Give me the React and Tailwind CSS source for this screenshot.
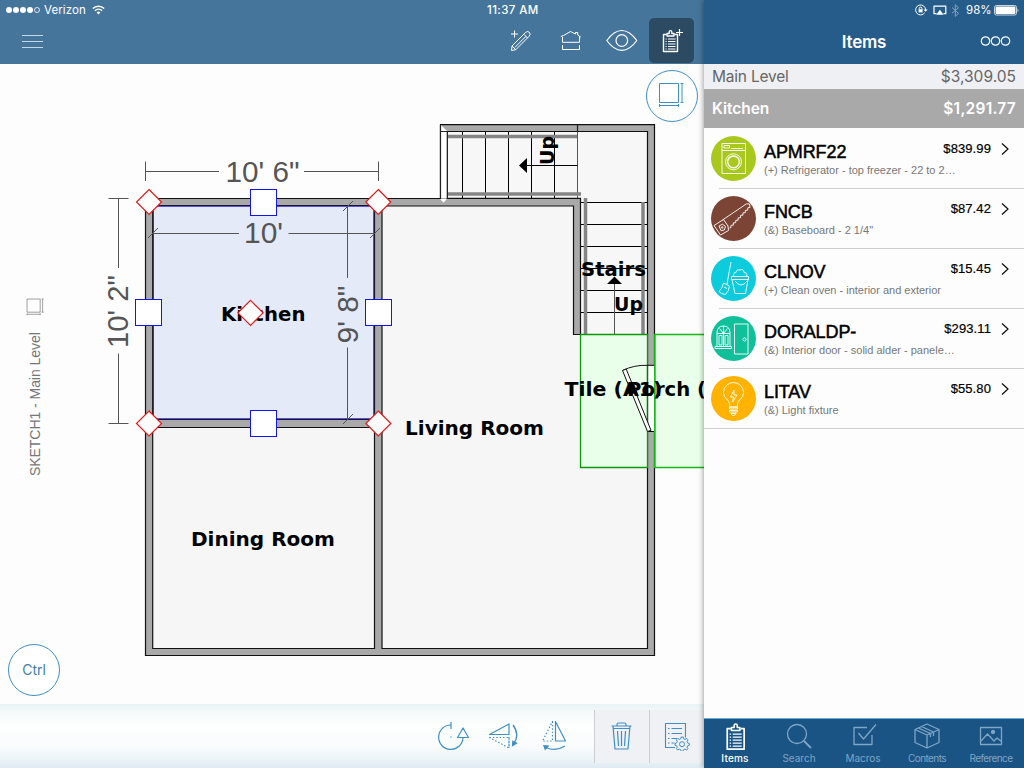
import React from 'react';

const stroke = { fill: 'none', stroke: 'currentColor', strokeLinejoin: 'round' };

function StatusLeft() {
  return (
    <div className="flex h-5 items-center pl-[6px] text-white">
      <div className="flex gap-[1px]">
        {[0, 1, 2, 3].map((n) => (
          <span key={n} className="h-[6px] w-[6px] rounded-full bg-white" />
        ))}
        <span className="h-[6px] w-[6px] rounded-full border border-white/80" />
      </div>
      <span className="ml-[4px] w-[43px] whitespace-nowrap text-[11.5px] leading-5 tracking-[0.1px]">Verizon</span>
      <svg className="ml-[5px]" width="13" height="10" viewBox="0 0 13 10" {...stroke}>
        <path d="M.8 3.5a8.2 8.2 0 0 1 11.4 0" strokeWidth="1.5" />
        <path d="M2.9 5.7a5.2 5.2 0 0 1 7.2 0" strokeWidth="1.5" />
        <path d="M6.5 9.4 4.6 7.4a2.8 2.8 0 0 1 3.8 0Z" fill="currentColor" stroke="none" />
      </svg>
      <span className="ml-[382px] whitespace-nowrap text-[11.5px] font-medium leading-5 tracking-[0.4px]">11:37 AM</span>
    </div>
  );
}

function StatusRight() {
  return (
    <div className="flex h-5 items-center pl-[211px] text-white">
      <svg width="13" height="12" viewBox="0 0 13 12" {...stroke}>
        <path d="M9.7 8.8A5 5 0 1 1 10.6 6" />
        <path d="m8.5 5.5 2.1 2.2 2.1-2.2Z" fill="currentColor" stroke="none" />
        <path d="M4.3 5.4v-1a1.3 1.3 0 0 1 2.6 0v1" />
        <path d="M3.6 5.2h4v3.2h-4Z" fill="currentColor" stroke="none" />
      </svg>
      <svg className="ml-[5px]" width="14" height="11" viewBox="0 0 14 11" {...stroke}>
        <path d="M3.5 8.7H1V1.2h11.8v7.5h-2.3" strokeWidth="1.2" />
        <path d="m6.9 4.8 3.7 5H3.2Z" fill="currentColor" stroke="none" />
      </svg>
      <svg className="ml-[4px] text-[#84a5c0]" width="9" height="13" viewBox="0 0 9 13" {...stroke}>
        <path d="m1 3.5 6.5 5.8-3.2 3V.8l3.2 3L1 9.2" />
      </svg>
      <span className="ml-[6px] w-[26px] whitespace-nowrap text-[11.5px] leading-5">98%</span>
      <svg className="ml-[2px]" width="25" height="11" viewBox="0 0 25 11">
        <rect x=".5" y=".5" width="22" height="9.5" rx="1.8" fill="none" stroke="#c7d6e2" />
        <rect x="1.6" y="1.6" width="19.8" height="7.4" rx=".8" fill="#fff" />
        <path d="M23.5 3.5c1.3.4 1.3 3.2 0 3.6Z" fill="#c7d6e2" />
      </svg>
    </div>
  );
}

function Clipboard({ plus, width, height }) {
  return (
    <svg width={width} height={height} viewBox="0 0 24 24" {...stroke}>
      <path d="M6.500 5.500H3.500V22.500h14V5.500h-3" strokeWidth="1.400" />
      <path d="M7 7V4.500h2.200V3a1.300 1.300 0 0 1 2.600 0v1.500H14V7Z" strokeWidth="1.300" />
      <path d="M5.500 10h1.200M8 10h7.500M5.500 12.500h1.200M8 12.500h7.500M5.500 15h1.200M8 15h7.500M5.500 17.500h1.200M8 17.500h7.500M5.500 20h1.200M8 20h7.500" />
      {plus && <path d="M19.500 0v7M16 3.500h7" strokeWidth="1.200" />}
    </svg>
  );
}

function EditorHeader() {
  return (
    <header className="h-16 bg-[#46759c]">
      <StatusLeft />
      <div className="flex h-11 items-center pb-[2px] text-white">
        <div className="ml-[22px] flex w-[21px] flex-col gap-[5px]">
          <span className="h-px bg-[#c3d8e4]" />
          <span className="h-px bg-[#c3d8e4]" />
          <span className="h-px bg-[#c3d8e4]" />
        </div>
        <svg className="ml-[467px]" width="24" height="26" viewBox="0 0 24 26" {...stroke}>
          <path d="M4.500 2.500v7M1 6h7" />
          <path d="M2 18 15.500 4.500q2-2 3.800-.200t0 3.800L5.800 21.700 1.500 22.500ZM2 18l3.800 3.700M13.800 6.200l3.900 3.900M16 8.300 5 19.300" />
        </svg>
        <svg className="ml-[26px]" width="22" height="24" viewBox="0 0 22 24" {...stroke}>
          <path d="m.8 7.800 1.700-1.300h1L10.500 2.500l5 2.500V3.500h2.200V6l3 2M2.500 7.500v5.800h17V7.500M2.500 16v4.500h17V16" />
        </svg>
        <svg className="ml-[24px]" width="32" height="24" viewBox="0 0 32 24" {...stroke}>
          <path d="M.8 11.500Q8 1.500 15.800 1.500t15 10q-7 9.800-15 9.800T.8 11.500Z" strokeWidth="1.200" />
          <circle cx="15.800" cy="11.500" r="5.800" strokeWidth="1.200" />
        </svg>
        <div className="-mt-px ml-[11px] flex h-[45px] w-[45px] items-center justify-center rounded-[5px] bg-[#2c4b63]">
          <Clipboard plus width={24} height={24} />
        </div>
      </div>
    </header>
  );
}

function Handle({ x, y, kind }) {
  return kind === 'square' ? (
    <rect x={x - 13} y={y - 13} width="26" height="26" fill="#fff" stroke="#1414ee" />
  ) : (
    <path d={`M${x} ${y - 12.500}l12.500 12.500-12.500 12.500-12.500-12.500Z`} fill="#fff" stroke="#e01b1b" strokeWidth="1.200" />
  );
}

const horizontalTreads = [462.500, 485.500, 508.500, 531.500, 554.500];
const verticalTreads = [202.500, 224.500, 246.500, 268.500, 290.500, 312.500];

function FloorPlan() {
  return (
    <svg className="block" width="704" height="640" viewBox="0 64 704 640">
      <g stroke="#111" strokeWidth="1.200">
        <path d="M145.500 198.500H440.500V124.700H654.500V655.500H145.500Z" fill="#a9a9a9" />
        <path d="M152.700 427.500H374.500V648.500H152.700Z" fill="#f6f6f6" />
        <path d="M382 206H573.500V334.500H647.500V648.500H382Z" fill="#f6f6f6" />
        <path d="M447.300 131.500H647.500V334.500H580.500V198.300H447.300Z" fill="#f7f7f7" />
        <path d="M152.700 205.500H374.500V419.500H152.700Z" fill="#e4eaf8" />
      </g>
      <path d="M153.500 206.300H373.700V418.700H153.500Z" fill="none" stroke="#3a2fc8" />
      <path d="M441 131.500h6v66.500h-6ZM441 125l6 6h-6ZM440 199h7l-3.500 3.500Z" fill="#fff" />
      <path d="M440.500 125v73.500M447.300 131.500v67M577.500 125v7" stroke="#222" strokeWidth="1.200" />
      <path d="M440.500 131.500h7" stroke="#222" />
      <g stroke="#000">
        {horizontalTreads.map((x) => <path key={x} d={`M${x} 132V198`} />)}
        {verticalTreads.map((y) => <path key={y} d={`M581 ${y}H647`} />)}
        <path d="M577.500 132V198" stroke="#555" />
        <path d="M527 165.500H577.500" />
        <path d="M614.500 283V334" stroke="#555" />
      </g>
      <path d="M519 165.500l8-7.500v15ZM607 284l7.500-7.500 7.500 7.500Z" fill="#000" />
      <path d="M448 136.500H577M448 194H581M585.500 198V334M643 202V334" stroke="#858585" strokeWidth="3.500" />

      <path d="M580.500 334.500H647.500V467.500H580.500Z" fill="#e9ffe9" stroke="#0b970b" strokeWidth="1.300" />
      <path d="M654.800 334.500H710V467.500H654.800Z" fill="#e9ffe9" stroke="#18b718" strokeWidth="1.300" />
      <path d="M648.200 365.300h6v66.200h-6Z" fill="#fff" />
      <path d="M648 365.300h6M648 431.500h6" stroke="#000" />
      <path d="M647.500 366v65" stroke="#087608" strokeWidth="1.300" />
      <path d="M654.800 334v134" stroke="#14bd14" strokeWidth="1.400" />
      <path d="M622.500 370.500Q634 364.800 648 365.300" fill="none" stroke="#111" />
      <path d="m622.500 370.500 3.700-1.500L651 430.300l-3.500 1.200Z" fill="#fff" stroke="#111" />

      <g fill="none" stroke="#555">
        <path d="M145.500 161.500v19.500M378.500 161.500v19.500M145.500 171.500H219M304 171.500H378.500" />
        <path d="M108.500 198.500h20M108.500 423.500h20M118.500 198.500V268M118.500 353.500V423.500" />
        <path d="M153 233.500H239M288.500 233.500H374M148 238l10-10M370 238l10-10" />
        <path d="M347.500 206V278M347.500 347.500V419M343 211l10-10M343 424l10-10" />
      </g>
      <g fill="#555" fontFamily="Liberation Sans, Arial, sans-serif" fontSize="29">
        <text x="225.500" y="181.500" textLength="74" lengthAdjust="spacingAndGlyphs">10' 6"</text>
        <text x="244" y="243" textLength="39" lengthAdjust="spacingAndGlyphs">10'</text>
        <text transform="translate(128 348) rotate(-90)" textLength="73" lengthAdjust="spacingAndGlyphs">10' 2"</text>
        <text transform="translate(357.500 343.500) rotate(-90)" textLength="58" lengthAdjust="spacingAndGlyphs">9' 8"</text>
      </g>
      <g fill="#000" fontFamily="DejaVu Sans, sans-serif" fontWeight="700" fontSize="19.500">
        <text x="221" y="320.500" textLength="84.500" lengthAdjust="spacingAndGlyphs">Kitchen</text>
        <text x="191" y="545.500" textLength="144" lengthAdjust="spacingAndGlyphs">Dining Room</text>
        <text x="405" y="434.500" textLength="139" lengthAdjust="spacingAndGlyphs">Living Room</text>
        <text x="581" y="276" textLength="65" lengthAdjust="spacingAndGlyphs">Stairs</text>
        <text x="614" y="311" textLength="29" lengthAdjust="spacingAndGlyphs">Up</text>
        <text transform="translate(554 165) rotate(-90)" textLength="29" lengthAdjust="spacingAndGlyphs">Up</text>
        <text x="564.500" y="395.500" textLength="98" lengthAdjust="spacingAndGlyphs">Tile (A1)</text>
        <text x="627" y="395.500" textLength="79" lengthAdjust="spacingAndGlyphs">Porch (</text>
      </g>
      <Handle x={263.500} y={202.500} kind="square" />
      <Handle x={148.500} y={312.500} kind="square" />
      <Handle x={378.500} y={312.500} kind="square" />
      <Handle x={263.500} y={423.500} kind="square" />
      <Handle x={149} y={202} />
      <Handle x={378.300} y={202} />
      <Handle x={149} y={423.500} />
      <Handle x={378.300} y={423.500} />
      <Handle x={250.500} y={312.800} />
    </svg>
  );
}

function DimensionIcon({ size }) {
  return (
    <svg width={size} height={size} viewBox="0 0 26 26" {...stroke}>
      <path d="M1.500 1.500h19v19h-19Z" />
      <path d="M22.500 1.500h3M22.500 20.500h3M24 1.500v19M1.500 22v3M20.500 22v3M1.500 23.500h19" />
    </svg>
  );
}

function EditorToolbar() {
  return (
    <footer className="flex h-16 items-center bg-[linear-gradient(to_bottom,#e8f3f6_0%,#f6fafb_14%,#fdfefe_35%,#fafcfd_65%,#eaf3f7_88%,#deebf2_100%)] text-[#3f8fc7]">
      <svg className="ml-[437px]" width="32" height="32" viewBox="0 0 32 32" {...stroke}>
        <path d="M14 5A12.200 12.200 0 1 0 26 18" strokeWidth="1.200" />
        <path d="M14 2v7" strokeWidth="1.200" />
        <path d="M26 8l5.500 9.500h-11Z" strokeWidth="1.200" />
        <path d="M13.300 17h1.400" />
      </svg>
      <svg className="ml-[19px]" width="32" height="32" viewBox="0 0 32 32" {...stroke}>
        <path d="M21 4v10.500H1.500Z" strokeWidth="1.200" />
        <path d="M1.500 17.500H21V28ZM21 17v11" strokeDasharray="1.400 2" strokeWidth="1.200" />
        <path d="M25 5q7 9.500 1 18.500" strokeWidth="1.300" />
        <path d="m24.300 20.300-.500 6.500 6-3.500Z" fill="currentColor" stroke="none" />
      </svg>
      <svg className="ml-[18px]" width="32" height="32" viewBox="0 0 32 32" {...stroke}>
        <path d="M17.500 1.500v19.500h10Z" strokeWidth="1.200" />
        <path d="M14.500 1.500v19.500H4.500Z" strokeDasharray="1.400 2" strokeWidth="1.200" />
        <path d="M8 27.500q9.500 4.500 19-1.500" strokeWidth="1.300" />
        <path d="m5 25 6.500.500-4.500 5Z" fill="currentColor" stroke="none" />
      </svg>
      <div className="ml-[24px] flex h-[53px] w-[55px] items-center justify-center border-l border-[#cacfd3] bg-[#f0f1f4] pr-[2px]">
        <svg width="23" height="30" viewBox="0 0 23 30" {...stroke}>
          <path d="M1.500 5h20M7 5V3.500q0-1.500 1.500-1.500h6Q16 2 16 3.500V5M3 5l2 23h13l2-23M3.500 7.500h16M7.500 10l1 15M11.500 10v15M15.500 10l-1 15" strokeWidth="1.200" />
        </svg>
      </div>
      <div className="flex h-[53px] w-[55px] items-center justify-center border-l border-[#cacfd3] bg-[#f0f1f4] pr-px">
        <svg width="27" height="30" viewBox="0 0 27 30" {...stroke}>
          <path d="M12 26.500H2.500v-24h20v14" strokeWidth="1.100" />
          <path d="M5 7.500h1.500M8.500 7.500H19M5 12.500h1.500M8.500 12.500H19M5 17.500h1.500M8.500 17.500H14M5 22h1.500M8.500 22h3" />
          <path d="m17.700 17.800.500-1.800h2l.500 1.800 1.300.600 1.800-.900 1.200 1.300-.900 1.700.500 1.400 1.700.500v1.800l-1.700.600-.500 1.400.800 1.500-1.300 1.300-1.700-.900-1.400.600-.500 1.600h-1.800l-.500-1.600-1.400-.600-1.700.900-1.200-1.300.900-1.500-.600-1.400-1.700-.600v-1.800l1.700-.500.600-1.400-.900-1.700 1.300-1.300 1.700.9Z" />
          <circle cx="19" cy="23.200" r="2.500" />
        </svg>
      </div>
    </footer>
  );
}

function WasherArt() {
  return (
    <>
      <path d="M11 7.500h23.500v30H11ZM11 14.500h23.500M13 9.500h5.500v2.500H13ZM20 12.500h12" />
      <circle cx="22.500" cy="25.800" r="8" />
      <circle cx="22.500" cy="25.800" r="5.900" strokeWidth="1.500" />
    </>
  );
}

function SawArt() {
  return (
    <>
      <path d="M11.500 24 35.500 7.800l3 .200.500 3.500-2.200.300-.100 2.400-2.300.100-.100 2.400-2.300.100-.100 2.400-2.300.100-.100 2.400-2.300.100-.100 2.400-2.300.100-.100 2.400-2.300.100-.100 2.400-2.300.100-.100 2.400-1.500.300" />
      <path d="M3 29.500 12.500 23.500l4.500 6.500.500 4.500L9.500 39ZM8 30l3.500-1.800 3 2.300-1.200 3.500-3.300.700Z" />
      <circle cx="11.200" cy="31.500" r=".8" />
    </>
  );
}

function BucketArt() {
  return (
    <>
      <path d="M20 6 16 28M12.500 27l6 3q-.500 5-4 8.500-4-.500-6.500-3 3.500-3 4.500-8.500ZM13 31l3 1.500" />
      <path d="M21 23.500h16l-2.500 14h-10.500ZM20.500 20.500h17v3h-17ZM23 20.500q-1.500-4 2-4 .500-3.500 4-2.500 4-1.500 4 2.500 4 0 2.500 4M24 25q6 8 12 0" />
    </>
  );
}

function DoorArt() {
  return (
    <>
      <path d="M6 30.500V17q0-7 6.500-7t6.500 7v13.500ZM4 30.500h16.500v2H4ZM6 17.500h13M12.500 10v20.500M8.500 12.500l4 5 4-5M8 19.500h3V29H8ZM14 19.500h3V29h-3Z" />
      <path d="M23.500 8h13.500v30H23.500Z" />
      <circle cx="33.500" cy="23.500" r="1.600" />
    </>
  );
}

function BulbArt() {
  return (
    <path d="M18.500 31v-3q0-2.500-3-5-3-2.500-3-6.500a10 10 0 0 1 20 0q0 4-3 6.500-3 2.500-3 5v3ZM18.500 31h8v2h-8ZM18.500 34.500h8v1.500h-8ZM20 37.500h5q-.500 2-2.500 2t-2.500-2ZM23 14l-3.500 7h3l-1 5 4.500-7h-3Z" />
  );
}

const items = [
  { code: 'APMRF22', text: '(+) Refrigerator - top freezer - 22 to 2…', price: '$839.99', color: 'bg-[#a9c81e]', Art: WasherArt },
  { code: 'FNCB', text: '(&) Baseboard - 2 1/4"', price: '$87.42', color: 'bg-[#7c4435]', Art: SawArt },
  { code: 'CLNOV', text: '(+) Clean oven - interior and exterior', price: '$15.45', color: 'bg-[#0ccbdc]', Art: BucketArt },
  { code: 'DORALDP-', text: '(&) Interior door - solid alder - panele…', price: '$293.11', color: 'bg-[#10c09b]', Art: DoorArt },
  { code: 'LITAV', text: '(&) Light fixture', price: '$55.80', color: 'bg-[#ffb300]', Art: BulbArt },
];

function ItemRow({ item, last }) {
  const { Art } = item;
  return (
    <li className="relative flex h-[60px] pl-[7px] pt-[7px]">
      <div className={`h-[45px] w-[45px] shrink-0 rounded-full text-white/90 ${item.color}`}>
        <svg width="45" height="45" viewBox="0 0 45 45" {...stroke}><Art /></svg>
      </div>
      <div className="ml-2 flex grow flex-col font-['Liberation_Sans',Arial,sans-serif]">
        <div className="flex h-[24px] items-start">
          <span className="grow pt-[4px] text-[18px] leading-6 tracking-[-0.1px] text-black [-webkit-text-stroke:0.5px_black]">{item.code}</span>
          <span className="pt-[3px] text-[13px] leading-5 tracking-[0.1px] text-black [-webkit-text-stroke:0.2px_black]">{item.price}</span>
          <svg className="ml-[9px] mr-[14px] mt-[6px]" width="10" height="14" viewBox="0 0 10 14" {...stroke}>
            <path d="m2 1.500 6 5.500-6 5.500" stroke="#111" strokeWidth="1.300" />
          </svg>
        </div>
        <span className="whitespace-nowrap text-[11px] leading-5 text-[#777]">{item.text}</span>
      </div>
      <span className={`absolute bottom-0 right-0 h-px bg-[#cfcfcf] ${last ? 'left-0' : 'left-[15px]'}`} />
    </li>
  );
}

function TabIcon({ name }) {
  if (name === 'Items') return <Clipboard width={29} height={29} />;
  return (
    <svg width="28" height="28" viewBox="0 0 28 28" {...stroke} strokeWidth="1.300">
      {name === 'Search' && <><circle cx="12" cy="12" r="9.500" /><path d="m19 19 7 7" strokeWidth="1.800" /></>}
      {name === 'Macros' && <path d="M18 5.500H5v17h18V13M9.500 11l5 6L27 2.500" />}
      {name === 'Contents' && <path d="m14 2 12 5.500v13L14 26 2 20.500v-13Zm-12 5.500 12 5.500 12-5.500M14 13v13M8.500 4.500l12 5.500v4M5.500 6l12 5.500v3.500" />}
      {name === 'Reference' && <><path d="M3.500 5.500h21v17h-21ZM4 19l6.500-7 6.500 7 3-3 4.500 3.500" /><circle cx="16" cy="10" r="1.500" fill="currentColor" /></>}
    </svg>
  );
}

const tabs = ['Items', 'Search', 'Macros', 'Contents', 'Reference'];

function ItemsPanel() {
  return (
    <aside className="relative z-10 flex h-full w-[320px] shrink-0 flex-col bg-[#fdfdfd] shadow-[-1px_0_5px_rgba(0,0,0,0.35)]">
      <header className="h-16 bg-[#265c8a]">
        <StatusRight />
        <div className="grid h-11 grid-cols-3 items-center text-white">
          <span />
          <h1 className="text-center text-[17px] font-semibold leading-6 tracking-[-0.2px]">Items</h1>
          <svg className="mr-[13px] justify-self-end" width="31" height="12" viewBox="0 0 31 12" {...stroke}>
            <circle cx="5.500" cy="5" r="4.200" strokeWidth="1.200" /><circle cx="15.500" cy="5" r="4.200" strokeWidth="1.200" /><circle cx="25.500" cy="5" r="4.200" strokeWidth="1.200" />
          </svg>
        </div>
      </header>
      <div className="flex h-[25px] items-center justify-between bg-[#eff0f4] px-2 text-[15.500px] tracking-[-0.2px] text-[#666]">
        <span>Main Level</span><span className="tracking-[0.020px]">$3,309.05</span>
      </div>
      <div className="flex h-[39px] items-center justify-between bg-[#a9a9a9] px-2 text-[15.500px] font-semibold tracking-[-0.050px] text-white">
        <span>Kitchen</span><span className="tracking-[0.250px]">$1,291.77</span>
      </div>
      <ul className="grow pt-px">
        {items.map((item, i) => <ItemRow key={item.code} item={item} last={i === items.length - 1} />)}
      </ul>
      <nav className="grid h-[50px] grid-cols-5 border-t border-[#6da9d2] bg-[#1a5485]">
        {tabs.map((tab) => (
          <div key={tab} className={`flex flex-col items-center pr-[2px] pt-[3px] ${tab === 'Items' ? 'text-white' : 'text-[#7fa5c5]'}`}>
            <div className={`flex h-[28px] items-center ${tab === 'Items' ? 'pl-[4px]' : ''}`}><TabIcon name={tab} /></div>
            <span className={`mt-px text-[10px] leading-[14px] ${tab === 'Items' ? 'font-medium tracking-[0.200px]' : ''} ${tab === 'Reference' || tab === 'Contents' ? 'tracking-[-0.600px]' : ''}`}>{tab}</span>
          </div>
        ))}
      </nav>
    </aside>
  );
}

export default function App() {
  return (
    <div className="flex h-[768px] w-[1024px] overflow-hidden bg-white font-['Inter','Liberation_Sans',sans-serif]">
      <main className="flex w-[704px] shrink-0 flex-col">
        <EditorHeader />
        <section className="relative h-[640px] overflow-hidden bg-[#fdfdfd]">
          <FloorPlan />
          <button className="absolute left-[646px] top-[6px] flex h-[52px] w-[52px] items-center justify-center rounded-full border border-[#3f8fc7] bg-white pb-[2px] pr-[3px] text-[#3f8fc7]">
            <DimensionIcon size={26} />
          </button>
          <div className="absolute left-[25px] top-[234px] flex w-5 flex-col items-center gap-[15px] text-[#777]">
            <div className="text-[#777]"><DimensionIcon size={18} /></div>
            <span className="h-[145px] rotate-180 whitespace-nowrap font-['Liberation_Sans',sans-serif] text-[14px] leading-5 tracking-[-0.050px] [writing-mode:vertical-rl]">SKETCH1 - Main Level</span>
          </div>
          <button className="absolute left-[8px] top-[580px] flex h-[52px] w-[52px] items-center justify-center rounded-full border border-[#3f8fc7] bg-white pb-px text-[14px] text-[#417da9]">
            Ctrl
          </button>
        </section>
        <EditorToolbar />
      </main>
      <ItemsPanel />
    </div>
  );
}
